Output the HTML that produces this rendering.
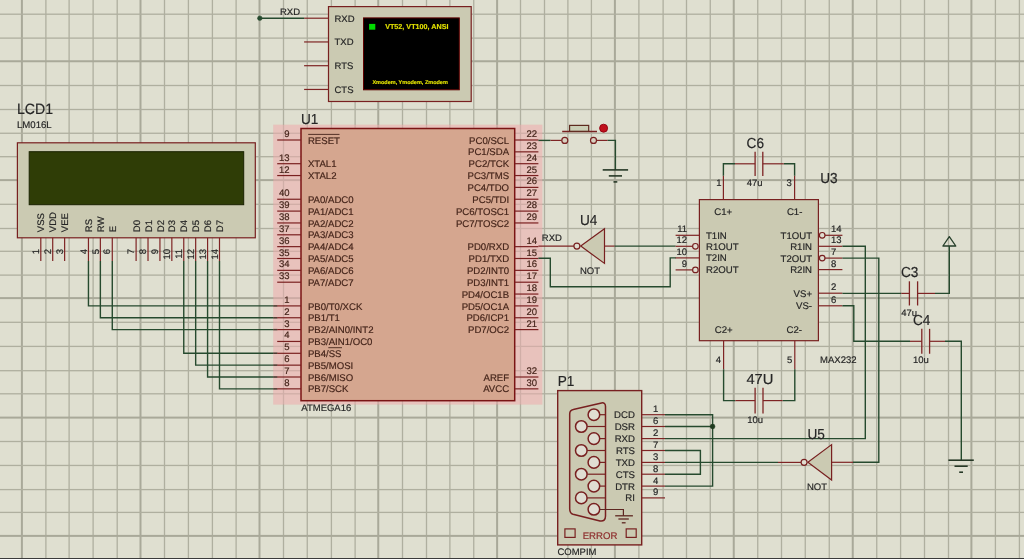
<!DOCTYPE html>
<html><head><meta charset="utf-8"><style>
html,body{margin:0;padding:0;background:#dfdfd0;}
svg{display:block;font-family:"Liberation Sans", sans-serif;will-change:transform;text-rendering:geometricPrecision;}
</style></head><body>
<svg width="1024" height="559" viewBox="0 0 1024 559">
<rect x="0" y="0" width="1024" height="559" fill="#dfdfd0"/>
<rect x="20.90" y="0" width="2" height="559" fill="#a9a999"/>
<rect x="45.25" y="0" width="1.3" height="559" fill="#afaf9f"/>
<rect x="68.45" y="0" width="1.3" height="559" fill="#afaf9f"/>
<rect x="92.45" y="0" width="1.3" height="559" fill="#afaf9f"/>
<rect x="116.55" y="0" width="1.3" height="559" fill="#afaf9f"/>
<rect x="139.50" y="0" width="2" height="559" fill="#a9a999"/>
<rect x="163.85" y="0" width="1.3" height="559" fill="#afaf9f"/>
<rect x="187.75" y="0" width="1.3" height="559" fill="#afaf9f"/>
<rect x="211.75" y="0" width="1.3" height="559" fill="#afaf9f"/>
<rect x="235.45" y="0" width="1.3" height="559" fill="#afaf9f"/>
<rect x="258.50" y="0" width="2" height="559" fill="#a9a999"/>
<rect x="282.85" y="0" width="1.3" height="559" fill="#afaf9f"/>
<rect x="306.60" y="0" width="1.3" height="559" fill="#afaf9f"/>
<rect x="330.75" y="0" width="1.3" height="559" fill="#afaf9f"/>
<rect x="354.45" y="0" width="1.3" height="559" fill="#afaf9f"/>
<rect x="377.25" y="0" width="2" height="559" fill="#a9a999"/>
<rect x="401.85" y="0" width="1.3" height="559" fill="#afaf9f"/>
<rect x="425.85" y="0" width="1.3" height="559" fill="#afaf9f"/>
<rect x="449.25" y="0" width="1.3" height="559" fill="#afaf9f"/>
<rect x="473.10" y="0" width="1.3" height="559" fill="#afaf9f"/>
<rect x="496.10" y="0" width="2" height="559" fill="#a9a999"/>
<rect x="519.85" y="0" width="1.3" height="559" fill="#afaf9f"/>
<rect x="543.85" y="0" width="1.3" height="559" fill="#afaf9f"/>
<rect x="567.25" y="0" width="1.3" height="559" fill="#afaf9f"/>
<rect x="590.75" y="0" width="1.3" height="559" fill="#afaf9f"/>
<rect x="613.90" y="0" width="2" height="559" fill="#a9a999"/>
<rect x="638.25" y="0" width="1.3" height="559" fill="#afaf9f"/>
<rect x="662.45" y="0" width="1.3" height="559" fill="#afaf9f"/>
<rect x="685.85" y="0" width="1.3" height="559" fill="#afaf9f"/>
<rect x="709.60" y="0" width="1.3" height="559" fill="#afaf9f"/>
<rect x="732.75" y="0" width="2" height="559" fill="#a9a999"/>
<rect x="757.10" y="0" width="1.3" height="559" fill="#afaf9f"/>
<rect x="780.85" y="0" width="1.3" height="559" fill="#afaf9f"/>
<rect x="804.60" y="0" width="1.3" height="559" fill="#afaf9f"/>
<rect x="828.60" y="0" width="1.3" height="559" fill="#afaf9f"/>
<rect x="851.75" y="0" width="2" height="559" fill="#a9a999"/>
<rect x="876.10" y="0" width="1.3" height="559" fill="#afaf9f"/>
<rect x="899.95" y="0" width="1.3" height="559" fill="#afaf9f"/>
<rect x="923.85" y="0" width="1.3" height="559" fill="#afaf9f"/>
<rect x="947.85" y="0" width="1.3" height="559" fill="#afaf9f"/>
<rect x="970.40" y="0" width="2" height="559" fill="#a9a999"/>
<rect x="994.75" y="0" width="1.3" height="559" fill="#afaf9f"/>
<rect x="1018.75" y="0" width="1.3" height="559" fill="#afaf9f"/>
<rect x="0" y="13.55" width="1024" height="1.3" fill="#afaf9f"/>
<rect x="0" y="37.45" width="1024" height="1.3" fill="#afaf9f"/>
<rect x="0" y="60.25" width="1024" height="2" fill="#a9a999"/>
<rect x="0" y="84.85" width="1024" height="1.3" fill="#afaf9f"/>
<rect x="0" y="108.85" width="1024" height="1.3" fill="#afaf9f"/>
<rect x="0" y="132.60" width="1024" height="1.3" fill="#afaf9f"/>
<rect x="0" y="156.05" width="1024" height="1.3" fill="#afaf9f"/>
<rect x="0" y="179.10" width="1024" height="2" fill="#a9a999"/>
<rect x="0" y="203.65" width="1024" height="1.3" fill="#afaf9f"/>
<rect x="0" y="227.85" width="1024" height="1.3" fill="#afaf9f"/>
<rect x="0" y="250.65" width="1024" height="1.3" fill="#afaf9f"/>
<rect x="0" y="274.45" width="1024" height="1.3" fill="#afaf9f"/>
<rect x="0" y="297.10" width="1024" height="2" fill="#a9a999"/>
<rect x="0" y="321.65" width="1024" height="1.3" fill="#afaf9f"/>
<rect x="0" y="345.75" width="1024" height="1.3" fill="#afaf9f"/>
<rect x="0" y="370.05" width="1024" height="1.3" fill="#afaf9f"/>
<rect x="0" y="393.15" width="1024" height="1.3" fill="#afaf9f"/>
<rect x="0" y="416.60" width="1024" height="2" fill="#a9a999"/>
<rect x="0" y="440.85" width="1024" height="1.3" fill="#afaf9f"/>
<rect x="0" y="464.80" width="1024" height="1.3" fill="#afaf9f"/>
<rect x="0" y="488.95" width="1024" height="1.3" fill="#afaf9f"/>
<rect x="0" y="511.75" width="1024" height="1.3" fill="#afaf9f"/>
<rect x="0" y="534.90" width="1024" height="2" fill="#a9a999"/>
<rect x="328.50" y="6.60" width="142.70" height="94.90" stroke="#782020" fill="#cbcab2" stroke-width="1.2"/>
<line x1="304.10" y1="18.20" x2="328.50" y2="18.20" stroke="#7e2424" stroke-width="1.2"/>
<text x="0" y="0" font-size="9.50" text-anchor="start" fill="#262626" stroke="#262626" stroke-width="0.18" font-weight="normal" transform="translate(334.50 21.70)">RXD</text>
<line x1="304.10" y1="41.95" x2="328.50" y2="41.95" stroke="#7e2424" stroke-width="1.2"/>
<text x="0" y="0" font-size="9.50" text-anchor="start" fill="#262626" stroke="#262626" stroke-width="0.18" font-weight="normal" transform="translate(334.50 45.45)">TXD</text>
<line x1="304.10" y1="65.70" x2="328.50" y2="65.70" stroke="#7e2424" stroke-width="1.2"/>
<text x="0" y="0" font-size="9.50" text-anchor="start" fill="#262626" stroke="#262626" stroke-width="0.18" font-weight="normal" transform="translate(334.50 69.20)">RTS</text>
<line x1="304.10" y1="89.45" x2="328.50" y2="89.45" stroke="#7e2424" stroke-width="1.2"/>
<text x="0" y="0" font-size="9.50" text-anchor="start" fill="#262626" stroke="#262626" stroke-width="0.18" font-weight="normal" transform="translate(334.50 92.95)">CTS</text>
<line x1="259.80" y1="18.20" x2="304.10" y2="18.20" stroke="#264a2e" stroke-width="1.4"/>
<circle cx="259.80" cy="18.20" r="2.30" stroke="#264a2e" fill="#264a2e" stroke-width="0.5"/>
<text x="0" y="0" font-size="9.50" text-anchor="start" fill="#262626" stroke="#262626" stroke-width="0.18" font-weight="normal" transform="translate(280.00 14.60)">RXD</text>
<rect x="363.50" y="17.90" width="95.80" height="71.90" stroke="#600000" fill="#000000" stroke-width="1.0"/>
<rect x="369.10" y="23.90" width="6.20" height="5.80" stroke="none" fill="#00dd00" stroke-width="0"/>
<text x="0" y="0" font-size="7.20" text-anchor="middle" fill="#dede00" stroke="#dede00" stroke-width="0.18" font-weight="bold" transform="translate(416.80 29.20)">VT52, VT100, ANSI</text>
<text x="0" y="0" font-size="5.50" text-anchor="middle" fill="#dede00" stroke="#dede00" stroke-width="0.18" font-weight="bold" transform="translate(410.10 84.20)">Xmodem, Ymodem, Zmodem</text>
<text x="0" y="0" font-size="15.01" text-anchor="start" fill="#262626" stroke="#262626" stroke-width="0.18" font-weight="normal" transform="translate(17.00 114.10) scale(0.940 1)">LCD1</text>
<text x="0" y="0" font-size="9.60" text-anchor="start" fill="#262626" stroke="#262626" stroke-width="0.18" font-weight="normal" transform="translate(17.00 127.60)">LM016L</text>
<rect x="17.40" y="142.80" width="237.90" height="95.00" stroke="#782020" fill="#cbcab2" stroke-width="1.2"/>
<rect x="29.20" y="151.70" width="214.50" height="53.00" stroke="#1a2200" fill="#2f3d06" stroke-width="1.0"/>
<text x="0" y="0" font-size="9.50" text-anchor="start" fill="#262626" stroke="#262626" stroke-width="0.18" font-weight="normal" transform="translate(44.40 232.20) rotate(-90)">VSS</text>
<text x="0" y="0" font-size="9.50" text-anchor="end" fill="#262626" stroke="#262626" stroke-width="0.18" font-weight="normal" transform="translate(39.00 248.90) rotate(-90)">1</text>
<line x1="40.80" y1="237.80" x2="40.80" y2="261.00" stroke="#7e2424" stroke-width="1.2"/>
<text x="0" y="0" font-size="9.50" text-anchor="start" fill="#262626" stroke="#262626" stroke-width="0.18" font-weight="normal" transform="translate(56.31 232.20) rotate(-90)">VDD</text>
<text x="0" y="0" font-size="9.50" text-anchor="end" fill="#262626" stroke="#262626" stroke-width="0.18" font-weight="normal" transform="translate(50.91 248.90) rotate(-90)">2</text>
<line x1="52.71" y1="237.80" x2="52.71" y2="261.00" stroke="#7e2424" stroke-width="1.2"/>
<text x="0" y="0" font-size="9.50" text-anchor="start" fill="#262626" stroke="#262626" stroke-width="0.18" font-weight="normal" transform="translate(68.23 232.20) rotate(-90)">VEE</text>
<text x="0" y="0" font-size="9.50" text-anchor="end" fill="#262626" stroke="#262626" stroke-width="0.18" font-weight="normal" transform="translate(62.83 248.90) rotate(-90)">3</text>
<line x1="64.63" y1="237.80" x2="64.63" y2="261.00" stroke="#7e2424" stroke-width="1.2"/>
<text x="0" y="0" font-size="9.50" text-anchor="start" fill="#262626" stroke="#262626" stroke-width="0.18" font-weight="normal" transform="translate(92.05 232.20) rotate(-90)">RS</text>
<text x="0" y="0" font-size="9.50" text-anchor="end" fill="#262626" stroke="#262626" stroke-width="0.18" font-weight="normal" transform="translate(86.65 248.90) rotate(-90)">4</text>
<line x1="88.45" y1="237.80" x2="88.45" y2="261.00" stroke="#7e2424" stroke-width="1.2"/>
<text x="0" y="0" font-size="9.50" text-anchor="start" fill="#262626" stroke="#262626" stroke-width="0.18" font-weight="normal" transform="translate(103.96 232.20) rotate(-90)">RW</text>
<text x="0" y="0" font-size="9.50" text-anchor="end" fill="#262626" stroke="#262626" stroke-width="0.18" font-weight="normal" transform="translate(98.56 248.90) rotate(-90)">5</text>
<line x1="100.36" y1="237.80" x2="100.36" y2="261.00" stroke="#7e2424" stroke-width="1.2"/>
<text x="0" y="0" font-size="9.50" text-anchor="start" fill="#262626" stroke="#262626" stroke-width="0.18" font-weight="normal" transform="translate(115.88 232.20) rotate(-90)">E</text>
<text x="0" y="0" font-size="9.50" text-anchor="end" fill="#262626" stroke="#262626" stroke-width="0.18" font-weight="normal" transform="translate(110.48 248.90) rotate(-90)">6</text>
<line x1="112.28" y1="237.80" x2="112.28" y2="261.00" stroke="#7e2424" stroke-width="1.2"/>
<text x="0" y="0" font-size="9.50" text-anchor="start" fill="#262626" stroke="#262626" stroke-width="0.18" font-weight="normal" transform="translate(139.70 232.20) rotate(-90)">D0</text>
<text x="0" y="0" font-size="9.50" text-anchor="end" fill="#262626" stroke="#262626" stroke-width="0.18" font-weight="normal" transform="translate(134.30 248.90) rotate(-90)">7</text>
<line x1="136.10" y1="237.80" x2="136.10" y2="261.00" stroke="#7e2424" stroke-width="1.2"/>
<text x="0" y="0" font-size="9.50" text-anchor="start" fill="#262626" stroke="#262626" stroke-width="0.18" font-weight="normal" transform="translate(151.62 232.20) rotate(-90)">D1</text>
<text x="0" y="0" font-size="9.50" text-anchor="end" fill="#262626" stroke="#262626" stroke-width="0.18" font-weight="normal" transform="translate(146.22 248.90) rotate(-90)">8</text>
<line x1="148.02" y1="237.80" x2="148.02" y2="261.00" stroke="#7e2424" stroke-width="1.2"/>
<text x="0" y="0" font-size="9.50" text-anchor="start" fill="#262626" stroke="#262626" stroke-width="0.18" font-weight="normal" transform="translate(163.53 232.20) rotate(-90)">D2</text>
<text x="0" y="0" font-size="9.50" text-anchor="end" fill="#262626" stroke="#262626" stroke-width="0.18" font-weight="normal" transform="translate(158.13 248.90) rotate(-90)">9</text>
<line x1="159.93" y1="237.80" x2="159.93" y2="261.00" stroke="#7e2424" stroke-width="1.2"/>
<text x="0" y="0" font-size="9.50" text-anchor="start" fill="#262626" stroke="#262626" stroke-width="0.18" font-weight="normal" transform="translate(175.44 232.20) rotate(-90)">D3</text>
<text x="0" y="0" font-size="9.50" text-anchor="end" fill="#262626" stroke="#262626" stroke-width="0.18" font-weight="normal" transform="translate(170.04 248.90) rotate(-90)">10</text>
<line x1="171.84" y1="237.80" x2="171.84" y2="261.00" stroke="#7e2424" stroke-width="1.2"/>
<text x="0" y="0" font-size="9.50" text-anchor="start" fill="#262626" stroke="#262626" stroke-width="0.18" font-weight="normal" transform="translate(187.36 232.20) rotate(-90)">D4</text>
<text x="0" y="0" font-size="9.50" text-anchor="end" fill="#262626" stroke="#262626" stroke-width="0.18" font-weight="normal" transform="translate(181.96 248.90) rotate(-90)">11</text>
<line x1="183.76" y1="237.80" x2="183.76" y2="261.00" stroke="#7e2424" stroke-width="1.2"/>
<text x="0" y="0" font-size="9.50" text-anchor="start" fill="#262626" stroke="#262626" stroke-width="0.18" font-weight="normal" transform="translate(199.27 232.20) rotate(-90)">D5</text>
<text x="0" y="0" font-size="9.50" text-anchor="end" fill="#262626" stroke="#262626" stroke-width="0.18" font-weight="normal" transform="translate(193.87 248.90) rotate(-90)">12</text>
<line x1="195.67" y1="237.80" x2="195.67" y2="261.00" stroke="#7e2424" stroke-width="1.2"/>
<text x="0" y="0" font-size="9.50" text-anchor="start" fill="#262626" stroke="#262626" stroke-width="0.18" font-weight="normal" transform="translate(211.18 232.20) rotate(-90)">D6</text>
<text x="0" y="0" font-size="9.50" text-anchor="end" fill="#262626" stroke="#262626" stroke-width="0.18" font-weight="normal" transform="translate(205.78 248.90) rotate(-90)">13</text>
<line x1="207.58" y1="237.80" x2="207.58" y2="261.00" stroke="#7e2424" stroke-width="1.2"/>
<text x="0" y="0" font-size="9.50" text-anchor="start" fill="#262626" stroke="#262626" stroke-width="0.18" font-weight="normal" transform="translate(223.09 232.20) rotate(-90)">D7</text>
<text x="0" y="0" font-size="9.50" text-anchor="end" fill="#262626" stroke="#262626" stroke-width="0.18" font-weight="normal" transform="translate(217.69 248.90) rotate(-90)">14</text>
<line x1="219.50" y1="237.80" x2="219.50" y2="261.00" stroke="#7e2424" stroke-width="1.2"/>
<polyline points="88.45,261.00 88.45,305.90 277.20,305.90" stroke="#264a2e" stroke-width="1.4" fill="none" stroke-linejoin="miter"/>
<polyline points="100.36,261.00 100.36,317.75 277.20,317.75" stroke="#264a2e" stroke-width="1.4" fill="none" stroke-linejoin="miter"/>
<polyline points="112.28,261.00 112.28,329.60 277.20,329.60" stroke="#264a2e" stroke-width="1.4" fill="none" stroke-linejoin="miter"/>
<polyline points="183.76,261.00 183.76,353.30 277.20,353.30" stroke="#264a2e" stroke-width="1.4" fill="none" stroke-linejoin="miter"/>
<polyline points="195.67,261.00 195.67,365.15 277.20,365.15" stroke="#264a2e" stroke-width="1.4" fill="none" stroke-linejoin="miter"/>
<polyline points="207.58,261.00 207.58,377.00 277.20,377.00" stroke="#264a2e" stroke-width="1.4" fill="none" stroke-linejoin="miter"/>
<polyline points="219.50,261.00 219.50,388.85 277.20,388.85" stroke="#264a2e" stroke-width="1.4" fill="none" stroke-linejoin="miter"/>
<path d="M273.3,124.8 H542.3 V404.4 H273.3 Z M301.0,128.5 V400.7 H514.7 V128.5 Z" fill="#ffdde0" fill-rule="evenodd" style="mix-blend-mode:multiply"/>
<path d="M273.3,124.8 H542.3 V404.4 H273.3 Z M301.0,128.5 V400.7 H514.7 V128.5 Z" fill="rgba(241,195,193,0.5)" fill-rule="evenodd"/>
<line x1="273.3" y1="388.85" x2="277.4" y2="388.85" stroke="#4e3a30" stroke-width="1.4"/>
<line x1="273.3" y1="377.00" x2="277.4" y2="377.00" stroke="#4e3a30" stroke-width="1.4"/>
<line x1="273.3" y1="365.15" x2="277.4" y2="365.15" stroke="#4e3a30" stroke-width="1.4"/>
<line x1="273.3" y1="353.30" x2="277.4" y2="353.30" stroke="#4e3a30" stroke-width="1.4"/>
<line x1="273.3" y1="329.60" x2="277.4" y2="329.60" stroke="#4e3a30" stroke-width="1.4"/>
<line x1="273.3" y1="317.75" x2="277.4" y2="317.75" stroke="#4e3a30" stroke-width="1.4"/>
<line x1="273.3" y1="305.90" x2="277.4" y2="305.90" stroke="#4e3a30" stroke-width="1.4"/>
<rect x="301.00" y="128.50" width="213.70" height="272.20" stroke="#7a1414" fill="#d5a68f" stroke-width="1.5"/>
<text x="0" y="0" font-size="14.49" text-anchor="start" fill="#262626" stroke="#262626" stroke-width="0.18" font-weight="normal" transform="translate(301.00 123.70) scale(0.940 1)">U1</text>
<text x="0" y="0" font-size="9.50" text-anchor="start" fill="#262626" stroke="#262626" stroke-width="0.18" font-weight="normal" transform="translate(301.30 410.60)">ATMEGA16</text>
<line x1="277.20" y1="140.00" x2="301.00" y2="140.00" stroke="#7a2020" stroke-width="1.2"/>
<text x="0" y="0" font-size="9.50" text-anchor="end" fill="#44241a" stroke="#44241a" stroke-width="0.18" font-weight="normal" transform="translate(289.50 137.00)">9</text>
<text x="0" y="0" font-size="9.60" text-anchor="start" fill="#44241a" stroke="#44241a" stroke-width="0.18" font-weight="normal" transform="translate(307.90 143.60)">RESET</text>
<line x1="277.20" y1="163.70" x2="301.00" y2="163.70" stroke="#7a2020" stroke-width="1.2"/>
<text x="0" y="0" font-size="9.50" text-anchor="end" fill="#44241a" stroke="#44241a" stroke-width="0.18" font-weight="normal" transform="translate(289.50 160.70)">13</text>
<text x="0" y="0" font-size="9.60" text-anchor="start" fill="#44241a" stroke="#44241a" stroke-width="0.18" font-weight="normal" transform="translate(307.90 167.30)">XTAL1</text>
<line x1="277.20" y1="175.55" x2="301.00" y2="175.55" stroke="#7a2020" stroke-width="1.2"/>
<text x="0" y="0" font-size="9.50" text-anchor="end" fill="#44241a" stroke="#44241a" stroke-width="0.18" font-weight="normal" transform="translate(289.50 172.55)">12</text>
<text x="0" y="0" font-size="9.60" text-anchor="start" fill="#44241a" stroke="#44241a" stroke-width="0.18" font-weight="normal" transform="translate(307.90 179.15)">XTAL2</text>
<line x1="277.20" y1="199.25" x2="301.00" y2="199.25" stroke="#7a2020" stroke-width="1.2"/>
<text x="0" y="0" font-size="9.50" text-anchor="end" fill="#44241a" stroke="#44241a" stroke-width="0.18" font-weight="normal" transform="translate(289.50 196.25)">40</text>
<text x="0" y="0" font-size="9.60" text-anchor="start" fill="#44241a" stroke="#44241a" stroke-width="0.18" font-weight="normal" transform="translate(307.90 202.85)">PA0/ADC0</text>
<line x1="277.20" y1="211.10" x2="301.00" y2="211.10" stroke="#7a2020" stroke-width="1.2"/>
<text x="0" y="0" font-size="9.50" text-anchor="end" fill="#44241a" stroke="#44241a" stroke-width="0.18" font-weight="normal" transform="translate(289.50 208.10)">39</text>
<text x="0" y="0" font-size="9.60" text-anchor="start" fill="#44241a" stroke="#44241a" stroke-width="0.18" font-weight="normal" transform="translate(307.90 214.70)">PA1/ADC1</text>
<line x1="277.20" y1="222.95" x2="301.00" y2="222.95" stroke="#7a2020" stroke-width="1.2"/>
<text x="0" y="0" font-size="9.50" text-anchor="end" fill="#44241a" stroke="#44241a" stroke-width="0.18" font-weight="normal" transform="translate(289.50 219.95)">38</text>
<text x="0" y="0" font-size="9.60" text-anchor="start" fill="#44241a" stroke="#44241a" stroke-width="0.18" font-weight="normal" transform="translate(307.90 226.55)">PA2/ADC2</text>
<line x1="277.20" y1="234.80" x2="301.00" y2="234.80" stroke="#7a2020" stroke-width="1.2"/>
<text x="0" y="0" font-size="9.50" text-anchor="end" fill="#44241a" stroke="#44241a" stroke-width="0.18" font-weight="normal" transform="translate(289.50 231.80)">37</text>
<text x="0" y="0" font-size="9.60" text-anchor="start" fill="#44241a" stroke="#44241a" stroke-width="0.18" font-weight="normal" transform="translate(307.90 238.40)">PA3/ADC3</text>
<line x1="277.20" y1="246.65" x2="301.00" y2="246.65" stroke="#7a2020" stroke-width="1.2"/>
<text x="0" y="0" font-size="9.50" text-anchor="end" fill="#44241a" stroke="#44241a" stroke-width="0.18" font-weight="normal" transform="translate(289.50 243.65)">36</text>
<text x="0" y="0" font-size="9.60" text-anchor="start" fill="#44241a" stroke="#44241a" stroke-width="0.18" font-weight="normal" transform="translate(307.90 250.25)">PA4/ADC4</text>
<line x1="277.20" y1="258.50" x2="301.00" y2="258.50" stroke="#7a2020" stroke-width="1.2"/>
<text x="0" y="0" font-size="9.50" text-anchor="end" fill="#44241a" stroke="#44241a" stroke-width="0.18" font-weight="normal" transform="translate(289.50 255.50)">35</text>
<text x="0" y="0" font-size="9.60" text-anchor="start" fill="#44241a" stroke="#44241a" stroke-width="0.18" font-weight="normal" transform="translate(307.90 262.10)">PA5/ADC5</text>
<line x1="277.20" y1="270.35" x2="301.00" y2="270.35" stroke="#7a2020" stroke-width="1.2"/>
<text x="0" y="0" font-size="9.50" text-anchor="end" fill="#44241a" stroke="#44241a" stroke-width="0.18" font-weight="normal" transform="translate(289.50 267.35)">34</text>
<text x="0" y="0" font-size="9.60" text-anchor="start" fill="#44241a" stroke="#44241a" stroke-width="0.18" font-weight="normal" transform="translate(307.90 273.95)">PA6/ADC6</text>
<line x1="277.20" y1="282.20" x2="301.00" y2="282.20" stroke="#7a2020" stroke-width="1.2"/>
<text x="0" y="0" font-size="9.50" text-anchor="end" fill="#44241a" stroke="#44241a" stroke-width="0.18" font-weight="normal" transform="translate(289.50 279.20)">33</text>
<text x="0" y="0" font-size="9.60" text-anchor="start" fill="#44241a" stroke="#44241a" stroke-width="0.18" font-weight="normal" transform="translate(307.90 285.80)">PA7/ADC7</text>
<line x1="277.20" y1="305.90" x2="301.00" y2="305.90" stroke="#7a2020" stroke-width="1.2"/>
<text x="0" y="0" font-size="9.50" text-anchor="end" fill="#44241a" stroke="#44241a" stroke-width="0.18" font-weight="normal" transform="translate(289.50 302.90)">1</text>
<text x="0" y="0" font-size="9.60" text-anchor="start" fill="#44241a" stroke="#44241a" stroke-width="0.18" font-weight="normal" transform="translate(307.90 309.50)">PB0/T0/XCK</text>
<line x1="277.20" y1="317.75" x2="301.00" y2="317.75" stroke="#7a2020" stroke-width="1.2"/>
<text x="0" y="0" font-size="9.50" text-anchor="end" fill="#44241a" stroke="#44241a" stroke-width="0.18" font-weight="normal" transform="translate(289.50 314.75)">2</text>
<text x="0" y="0" font-size="9.60" text-anchor="start" fill="#44241a" stroke="#44241a" stroke-width="0.18" font-weight="normal" transform="translate(307.90 321.35)">PB1/T1</text>
<line x1="277.20" y1="329.60" x2="301.00" y2="329.60" stroke="#7a2020" stroke-width="1.2"/>
<text x="0" y="0" font-size="9.50" text-anchor="end" fill="#44241a" stroke="#44241a" stroke-width="0.18" font-weight="normal" transform="translate(289.50 326.60)">3</text>
<text x="0" y="0" font-size="9.60" text-anchor="start" fill="#44241a" stroke="#44241a" stroke-width="0.18" font-weight="normal" transform="translate(307.90 333.20)">PB2/AIN0/INT2</text>
<line x1="277.20" y1="341.45" x2="301.00" y2="341.45" stroke="#7a2020" stroke-width="1.2"/>
<text x="0" y="0" font-size="9.50" text-anchor="end" fill="#44241a" stroke="#44241a" stroke-width="0.18" font-weight="normal" transform="translate(289.50 338.45)">4</text>
<text x="0" y="0" font-size="9.60" text-anchor="start" fill="#44241a" stroke="#44241a" stroke-width="0.18" font-weight="normal" transform="translate(307.90 345.05)">PB3/AIN1/OC0</text>
<line x1="277.20" y1="353.30" x2="301.00" y2="353.30" stroke="#7a2020" stroke-width="1.2"/>
<text x="0" y="0" font-size="9.50" text-anchor="end" fill="#44241a" stroke="#44241a" stroke-width="0.18" font-weight="normal" transform="translate(289.50 350.30)">5</text>
<text x="0" y="0" font-size="9.60" text-anchor="start" fill="#44241a" stroke="#44241a" stroke-width="0.18" font-weight="normal" transform="translate(307.90 356.90)">PB4/SS</text>
<line x1="277.20" y1="365.15" x2="301.00" y2="365.15" stroke="#7a2020" stroke-width="1.2"/>
<text x="0" y="0" font-size="9.50" text-anchor="end" fill="#44241a" stroke="#44241a" stroke-width="0.18" font-weight="normal" transform="translate(289.50 362.15)">6</text>
<text x="0" y="0" font-size="9.60" text-anchor="start" fill="#44241a" stroke="#44241a" stroke-width="0.18" font-weight="normal" transform="translate(307.90 368.75)">PB5/MOSI</text>
<line x1="277.20" y1="377.00" x2="301.00" y2="377.00" stroke="#7a2020" stroke-width="1.2"/>
<text x="0" y="0" font-size="9.50" text-anchor="end" fill="#44241a" stroke="#44241a" stroke-width="0.18" font-weight="normal" transform="translate(289.50 374.00)">7</text>
<text x="0" y="0" font-size="9.60" text-anchor="start" fill="#44241a" stroke="#44241a" stroke-width="0.18" font-weight="normal" transform="translate(307.90 380.60)">PB6/MISO</text>
<line x1="277.20" y1="388.85" x2="301.00" y2="388.85" stroke="#7a2020" stroke-width="1.2"/>
<text x="0" y="0" font-size="9.50" text-anchor="end" fill="#44241a" stroke="#44241a" stroke-width="0.18" font-weight="normal" transform="translate(289.50 385.85)">8</text>
<text x="0" y="0" font-size="9.60" text-anchor="start" fill="#44241a" stroke="#44241a" stroke-width="0.18" font-weight="normal" transform="translate(307.90 392.45)">PB7/SCK</text>
<line x1="514.70" y1="140.00" x2="538.40" y2="140.00" stroke="#7a2020" stroke-width="1.2"/>
<text x="0" y="0" font-size="9.50" text-anchor="start" fill="#44241a" stroke="#44241a" stroke-width="0.18" font-weight="normal" transform="translate(526.50 137.00)">22</text>
<text x="0" y="0" font-size="9.60" text-anchor="end" fill="#44241a" stroke="#44241a" stroke-width="0.18" font-weight="normal" transform="translate(509.10 143.60)">PC0/SCL</text>
<line x1="514.70" y1="151.85" x2="538.40" y2="151.85" stroke="#7a2020" stroke-width="1.2"/>
<text x="0" y="0" font-size="9.50" text-anchor="start" fill="#44241a" stroke="#44241a" stroke-width="0.18" font-weight="normal" transform="translate(526.50 148.85)">23</text>
<text x="0" y="0" font-size="9.60" text-anchor="end" fill="#44241a" stroke="#44241a" stroke-width="0.18" font-weight="normal" transform="translate(509.10 155.45)">PC1/SDA</text>
<line x1="514.70" y1="163.70" x2="538.40" y2="163.70" stroke="#7a2020" stroke-width="1.2"/>
<text x="0" y="0" font-size="9.50" text-anchor="start" fill="#44241a" stroke="#44241a" stroke-width="0.18" font-weight="normal" transform="translate(526.50 160.70)">24</text>
<text x="0" y="0" font-size="9.60" text-anchor="end" fill="#44241a" stroke="#44241a" stroke-width="0.18" font-weight="normal" transform="translate(509.10 167.30)">PC2/TCK</text>
<line x1="514.70" y1="175.55" x2="538.40" y2="175.55" stroke="#7a2020" stroke-width="1.2"/>
<text x="0" y="0" font-size="9.50" text-anchor="start" fill="#44241a" stroke="#44241a" stroke-width="0.18" font-weight="normal" transform="translate(526.50 172.55)">25</text>
<text x="0" y="0" font-size="9.60" text-anchor="end" fill="#44241a" stroke="#44241a" stroke-width="0.18" font-weight="normal" transform="translate(509.10 179.15)">PC3/TMS</text>
<line x1="514.70" y1="187.40" x2="538.40" y2="187.40" stroke="#7a2020" stroke-width="1.2"/>
<text x="0" y="0" font-size="9.50" text-anchor="start" fill="#44241a" stroke="#44241a" stroke-width="0.18" font-weight="normal" transform="translate(526.50 184.40)">26</text>
<text x="0" y="0" font-size="9.60" text-anchor="end" fill="#44241a" stroke="#44241a" stroke-width="0.18" font-weight="normal" transform="translate(509.10 191.00)">PC4/TDO</text>
<line x1="514.70" y1="199.25" x2="538.40" y2="199.25" stroke="#7a2020" stroke-width="1.2"/>
<text x="0" y="0" font-size="9.50" text-anchor="start" fill="#44241a" stroke="#44241a" stroke-width="0.18" font-weight="normal" transform="translate(526.50 196.25)">27</text>
<text x="0" y="0" font-size="9.60" text-anchor="end" fill="#44241a" stroke="#44241a" stroke-width="0.18" font-weight="normal" transform="translate(509.10 202.85)">PC5/TDI</text>
<line x1="514.70" y1="211.10" x2="538.40" y2="211.10" stroke="#7a2020" stroke-width="1.2"/>
<text x="0" y="0" font-size="9.50" text-anchor="start" fill="#44241a" stroke="#44241a" stroke-width="0.18" font-weight="normal" transform="translate(526.50 208.10)">28</text>
<text x="0" y="0" font-size="9.60" text-anchor="end" fill="#44241a" stroke="#44241a" stroke-width="0.18" font-weight="normal" transform="translate(509.10 214.70)">PC6/TOSC1</text>
<line x1="514.70" y1="222.95" x2="538.40" y2="222.95" stroke="#7a2020" stroke-width="1.2"/>
<text x="0" y="0" font-size="9.50" text-anchor="start" fill="#44241a" stroke="#44241a" stroke-width="0.18" font-weight="normal" transform="translate(526.50 219.95)">29</text>
<text x="0" y="0" font-size="9.60" text-anchor="end" fill="#44241a" stroke="#44241a" stroke-width="0.18" font-weight="normal" transform="translate(509.10 226.55)">PC7/TOSC2</text>
<line x1="514.70" y1="246.65" x2="538.40" y2="246.65" stroke="#7a2020" stroke-width="1.2"/>
<text x="0" y="0" font-size="9.50" text-anchor="start" fill="#44241a" stroke="#44241a" stroke-width="0.18" font-weight="normal" transform="translate(526.50 243.65)">14</text>
<text x="0" y="0" font-size="9.60" text-anchor="end" fill="#44241a" stroke="#44241a" stroke-width="0.18" font-weight="normal" transform="translate(509.10 250.25)">PD0/RXD</text>
<line x1="514.70" y1="258.50" x2="538.40" y2="258.50" stroke="#7a2020" stroke-width="1.2"/>
<text x="0" y="0" font-size="9.50" text-anchor="start" fill="#44241a" stroke="#44241a" stroke-width="0.18" font-weight="normal" transform="translate(526.50 255.50)">15</text>
<text x="0" y="0" font-size="9.60" text-anchor="end" fill="#44241a" stroke="#44241a" stroke-width="0.18" font-weight="normal" transform="translate(509.10 262.10)">PD1/TXD</text>
<line x1="514.70" y1="270.35" x2="538.40" y2="270.35" stroke="#7a2020" stroke-width="1.2"/>
<text x="0" y="0" font-size="9.50" text-anchor="start" fill="#44241a" stroke="#44241a" stroke-width="0.18" font-weight="normal" transform="translate(526.50 267.35)">16</text>
<text x="0" y="0" font-size="9.60" text-anchor="end" fill="#44241a" stroke="#44241a" stroke-width="0.18" font-weight="normal" transform="translate(509.10 273.95)">PD2/INT0</text>
<line x1="514.70" y1="282.20" x2="538.40" y2="282.20" stroke="#7a2020" stroke-width="1.2"/>
<text x="0" y="0" font-size="9.50" text-anchor="start" fill="#44241a" stroke="#44241a" stroke-width="0.18" font-weight="normal" transform="translate(526.50 279.20)">17</text>
<text x="0" y="0" font-size="9.60" text-anchor="end" fill="#44241a" stroke="#44241a" stroke-width="0.18" font-weight="normal" transform="translate(509.10 285.80)">PD3/INT1</text>
<line x1="514.70" y1="294.05" x2="538.40" y2="294.05" stroke="#7a2020" stroke-width="1.2"/>
<text x="0" y="0" font-size="9.50" text-anchor="start" fill="#44241a" stroke="#44241a" stroke-width="0.18" font-weight="normal" transform="translate(526.50 291.05)">18</text>
<text x="0" y="0" font-size="9.60" text-anchor="end" fill="#44241a" stroke="#44241a" stroke-width="0.18" font-weight="normal" transform="translate(509.10 297.65)">PD4/OC1B</text>
<line x1="514.70" y1="305.90" x2="538.40" y2="305.90" stroke="#7a2020" stroke-width="1.2"/>
<text x="0" y="0" font-size="9.50" text-anchor="start" fill="#44241a" stroke="#44241a" stroke-width="0.18" font-weight="normal" transform="translate(526.50 302.90)">19</text>
<text x="0" y="0" font-size="9.60" text-anchor="end" fill="#44241a" stroke="#44241a" stroke-width="0.18" font-weight="normal" transform="translate(509.10 309.50)">PD5/OC1A</text>
<line x1="514.70" y1="317.75" x2="538.40" y2="317.75" stroke="#7a2020" stroke-width="1.2"/>
<text x="0" y="0" font-size="9.50" text-anchor="start" fill="#44241a" stroke="#44241a" stroke-width="0.18" font-weight="normal" transform="translate(526.50 314.75)">20</text>
<text x="0" y="0" font-size="9.60" text-anchor="end" fill="#44241a" stroke="#44241a" stroke-width="0.18" font-weight="normal" transform="translate(509.10 321.35)">PD6/ICP1</text>
<line x1="514.70" y1="329.60" x2="538.40" y2="329.60" stroke="#7a2020" stroke-width="1.2"/>
<text x="0" y="0" font-size="9.50" text-anchor="start" fill="#44241a" stroke="#44241a" stroke-width="0.18" font-weight="normal" transform="translate(526.50 326.60)">21</text>
<text x="0" y="0" font-size="9.60" text-anchor="end" fill="#44241a" stroke="#44241a" stroke-width="0.18" font-weight="normal" transform="translate(509.10 333.20)">PD7/OC2</text>
<line x1="514.70" y1="377.00" x2="538.40" y2="377.00" stroke="#7a2020" stroke-width="1.2"/>
<text x="0" y="0" font-size="9.50" text-anchor="start" fill="#44241a" stroke="#44241a" stroke-width="0.18" font-weight="normal" transform="translate(526.50 374.00)">32</text>
<text x="0" y="0" font-size="9.60" text-anchor="end" fill="#44241a" stroke="#44241a" stroke-width="0.18" font-weight="normal" transform="translate(509.10 380.60)">AREF</text>
<line x1="514.70" y1="388.85" x2="538.40" y2="388.85" stroke="#7a2020" stroke-width="1.2"/>
<text x="0" y="0" font-size="9.50" text-anchor="start" fill="#44241a" stroke="#44241a" stroke-width="0.18" font-weight="normal" transform="translate(526.50 385.85)">30</text>
<text x="0" y="0" font-size="9.60" text-anchor="end" fill="#44241a" stroke="#44241a" stroke-width="0.18" font-weight="normal" transform="translate(509.10 392.45)">AVCC</text>
<line x1="308.20" y1="134.40" x2="339.50" y2="134.40" stroke="#44241a" stroke-width="0.9"/>
<line x1="328.30" y1="347.70" x2="342.00" y2="347.70" stroke="#44241a" stroke-width="0.9"/>
<line x1="538.40" y1="140.40" x2="550.50" y2="140.40" stroke="#264a2e" stroke-width="1.4"/>
<line x1="550.50" y1="140.40" x2="561.80" y2="140.40" stroke="#7e2424" stroke-width="1.2"/>
<line x1="562.20" y1="131.50" x2="597.00" y2="131.50" stroke="#782020" stroke-width="1.3"/>
<rect x="569.60" y="125.40" width="19.10" height="5.90" stroke="#5e2a1e" fill="#cbcfb6" stroke-width="1.2"/>
<circle cx="603.60" cy="128.20" r="4.00" stroke="#900010" fill="#c0101c" stroke-width="0.9"/>
<circle cx="564.80" cy="140.40" r="3.00" stroke="#782020" fill="#d8d0c0" stroke-width="1.2"/>
<circle cx="593.50" cy="140.40" r="3.00" stroke="#782020" fill="#d8d0c0" stroke-width="1.2"/>
<line x1="596.50" y1="140.40" x2="607.70" y2="140.40" stroke="#7e2424" stroke-width="1.2"/>
<polyline points="607.70,140.40 615.40,140.40 615.40,169.90" stroke="#264a2e" stroke-width="1.4" fill="none" stroke-linejoin="miter"/>
<line x1="602.70" y1="169.90" x2="628.10" y2="169.90" stroke="#263826" stroke-width="1.6"/>
<line x1="608.80" y1="175.90" x2="622.00" y2="175.90" stroke="#263826" stroke-width="1.6"/>
<line x1="613.50" y1="181.90" x2="617.30" y2="181.90" stroke="#263826" stroke-width="1.6"/>
<line x1="538.40" y1="246.20" x2="574.00" y2="246.20" stroke="#7e2424" stroke-width="1.2"/>
<polygon points="604.50,228.80 604.50,263.40 580.70,246.10" fill="#cbcab2" stroke="#782020" stroke-width="1.2"/>
<circle cx="576.90" cy="246.10" r="3.00" stroke="#782020" fill="#e0ddd0" stroke-width="1.2"/>
<text x="0" y="0" font-size="14.49" text-anchor="start" fill="#262626" stroke="#262626" stroke-width="0.18" font-weight="normal" transform="translate(580.00 224.50) scale(0.940 1)">U4</text>
<text x="0" y="0" font-size="9.50" text-anchor="start" fill="#262626" stroke="#262626" stroke-width="0.18" font-weight="normal" transform="translate(580.00 274.20)">NOT</text>
<text x="0" y="0" font-size="9.50" text-anchor="start" fill="#262626" stroke="#262626" stroke-width="0.18" font-weight="normal" transform="translate(541.80 241.20)">RXD</text>
<line x1="604.50" y1="246.10" x2="614.60" y2="246.10" stroke="#7e2424" stroke-width="1.2"/>
<line x1="614.60" y1="246.10" x2="675.60" y2="246.10" stroke="#264a2e" stroke-width="1.4"/>
<polyline points="538.40,258.30 550.30,258.30 550.30,286.80 670.20,286.80 670.20,257.90 676.00,257.90" stroke="#264a2e" stroke-width="1.4" fill="none" stroke-linejoin="miter"/>
<rect x="699.40" y="199.60" width="119.00" height="141.10" stroke="#782020" fill="#cbcab2" stroke-width="1.2"/>
<text x="0" y="0" font-size="14.49" text-anchor="start" fill="#262626" stroke="#262626" stroke-width="0.18" font-weight="normal" transform="translate(820.20 182.60) scale(0.940 1)">U3</text>
<text x="0" y="0" font-size="9.50" text-anchor="start" fill="#262626" stroke="#262626" stroke-width="0.18" font-weight="normal" transform="translate(820.10 363.30)">MAX232</text>
<line x1="675.60" y1="235.30" x2="699.40" y2="235.30" stroke="#7e2424" stroke-width="1.2"/>
<text x="0" y="0" font-size="9.50" text-anchor="end" fill="#262626" stroke="#262626" stroke-width="0.18" font-weight="normal" transform="translate(687.00 232.20)">11</text>
<text x="0" y="0" font-size="9.60" text-anchor="start" fill="#262626" stroke="#262626" stroke-width="0.18" font-weight="normal" transform="translate(706.00 238.70)">T1IN</text>
<line x1="675.60" y1="246.30" x2="692.50" y2="246.30" stroke="#7e2424" stroke-width="1.2"/>
<circle cx="695.40" cy="246.30" r="2.80" stroke="#782020" fill="#e0ddd0" stroke-width="1.2"/>
<text x="0" y="0" font-size="9.50" text-anchor="end" fill="#262626" stroke="#262626" stroke-width="0.18" font-weight="normal" transform="translate(687.00 243.20)">12</text>
<text x="0" y="0" font-size="9.60" text-anchor="start" fill="#262626" stroke="#262626" stroke-width="0.18" font-weight="normal" transform="translate(706.00 249.70)">R1OUT</text>
<line x1="675.60" y1="257.90" x2="699.40" y2="257.90" stroke="#7e2424" stroke-width="1.2"/>
<text x="0" y="0" font-size="9.50" text-anchor="end" fill="#262626" stroke="#262626" stroke-width="0.18" font-weight="normal" transform="translate(687.00 254.80)">10</text>
<text x="0" y="0" font-size="9.60" text-anchor="start" fill="#262626" stroke="#262626" stroke-width="0.18" font-weight="normal" transform="translate(706.00 261.30)">T2IN</text>
<line x1="675.60" y1="269.90" x2="692.50" y2="269.90" stroke="#7e2424" stroke-width="1.2"/>
<circle cx="695.40" cy="269.90" r="2.80" stroke="#782020" fill="#e0ddd0" stroke-width="1.2"/>
<text x="0" y="0" font-size="9.50" text-anchor="end" fill="#262626" stroke="#262626" stroke-width="0.18" font-weight="normal" transform="translate(687.00 266.80)">9</text>
<text x="0" y="0" font-size="9.60" text-anchor="start" fill="#262626" stroke="#262626" stroke-width="0.18" font-weight="normal" transform="translate(706.00 273.30)">R2OUT</text>
<circle cx="822.20" cy="235.30" r="2.80" stroke="#782020" fill="#e0ddd0" stroke-width="1.2"/>
<line x1="825.00" y1="235.30" x2="842.40" y2="235.30" stroke="#7e2424" stroke-width="1.2"/>
<text x="0" y="0" font-size="9.50" text-anchor="start" fill="#262626" stroke="#262626" stroke-width="0.18" font-weight="normal" transform="translate(831.00 232.20)">14</text>
<text x="0" y="0" font-size="9.60" text-anchor="end" fill="#262626" stroke="#262626" stroke-width="0.18" font-weight="normal" transform="translate(812.00 238.70)">T1OUT</text>
<line x1="818.40" y1="246.30" x2="842.40" y2="246.30" stroke="#7e2424" stroke-width="1.2"/>
<text x="0" y="0" font-size="9.50" text-anchor="start" fill="#262626" stroke="#262626" stroke-width="0.18" font-weight="normal" transform="translate(831.00 243.20)">13</text>
<text x="0" y="0" font-size="9.60" text-anchor="end" fill="#262626" stroke="#262626" stroke-width="0.18" font-weight="normal" transform="translate(812.00 249.70)">R1IN</text>
<circle cx="822.20" cy="258.10" r="2.80" stroke="#782020" fill="#e0ddd0" stroke-width="1.2"/>
<line x1="825.00" y1="258.10" x2="842.40" y2="258.10" stroke="#7e2424" stroke-width="1.2"/>
<text x="0" y="0" font-size="9.50" text-anchor="start" fill="#262626" stroke="#262626" stroke-width="0.18" font-weight="normal" transform="translate(831.00 255.00)">7</text>
<text x="0" y="0" font-size="9.60" text-anchor="end" fill="#262626" stroke="#262626" stroke-width="0.18" font-weight="normal" transform="translate(812.00 261.50)">T2OUT</text>
<line x1="818.40" y1="269.60" x2="842.40" y2="269.60" stroke="#7e2424" stroke-width="1.2"/>
<text x="0" y="0" font-size="9.50" text-anchor="start" fill="#262626" stroke="#262626" stroke-width="0.18" font-weight="normal" transform="translate(831.00 266.50)">8</text>
<text x="0" y="0" font-size="9.60" text-anchor="end" fill="#262626" stroke="#262626" stroke-width="0.18" font-weight="normal" transform="translate(812.00 273.00)">R2IN</text>
<line x1="818.40" y1="293.20" x2="842.40" y2="293.20" stroke="#7e2424" stroke-width="1.2"/>
<text x="0" y="0" font-size="9.50" text-anchor="start" fill="#262626" stroke="#262626" stroke-width="0.18" font-weight="normal" transform="translate(831.00 290.10)">2</text>
<text x="0" y="0" font-size="9.60" text-anchor="end" fill="#262626" stroke="#262626" stroke-width="0.18" font-weight="normal" transform="translate(812.00 296.60)">VS+</text>
<line x1="818.40" y1="305.80" x2="842.40" y2="305.80" stroke="#7e2424" stroke-width="1.2"/>
<text x="0" y="0" font-size="9.50" text-anchor="start" fill="#262626" stroke="#262626" stroke-width="0.18" font-weight="normal" transform="translate(831.00 302.70)">6</text>
<text x="0" y="0" font-size="9.60" text-anchor="end" fill="#262626" stroke="#262626" stroke-width="0.18" font-weight="normal" transform="translate(812.00 309.20)">VS-</text>
<text x="0" y="0" font-size="9.60" text-anchor="start" fill="#262626" stroke="#262626" stroke-width="0.18" font-weight="normal" transform="translate(714.30 215.30)">C1+</text>
<text x="0" y="0" font-size="9.60" text-anchor="start" fill="#262626" stroke="#262626" stroke-width="0.18" font-weight="normal" transform="translate(786.90 215.30)">C1-</text>
<text x="0" y="0" font-size="9.60" text-anchor="start" fill="#262626" stroke="#262626" stroke-width="0.18" font-weight="normal" transform="translate(714.70 332.80)">C2+</text>
<text x="0" y="0" font-size="9.60" text-anchor="start" fill="#262626" stroke="#262626" stroke-width="0.18" font-weight="normal" transform="translate(786.60 332.80)">C2-</text>
<line x1="723.40" y1="199.60" x2="723.40" y2="175.70" stroke="#7e2424" stroke-width="1.2"/>
<line x1="794.60" y1="199.60" x2="794.60" y2="175.70" stroke="#7e2424" stroke-width="1.2"/>
<text x="0" y="0" font-size="9.50" text-anchor="start" fill="#262626" stroke="#262626" stroke-width="0.18" font-weight="normal" transform="translate(716.30 186.30)">1</text>
<text x="0" y="0" font-size="9.50" text-anchor="start" fill="#262626" stroke="#262626" stroke-width="0.18" font-weight="normal" transform="translate(786.40 186.30)">3</text>
<line x1="723.60" y1="340.80" x2="723.60" y2="369.30" stroke="#7e2424" stroke-width="1.2"/>
<line x1="794.80" y1="340.80" x2="794.80" y2="369.30" stroke="#7e2424" stroke-width="1.2"/>
<text x="0" y="0" font-size="9.50" text-anchor="start" fill="#262626" stroke="#262626" stroke-width="0.18" font-weight="normal" transform="translate(715.70 362.50)">4</text>
<text x="0" y="0" font-size="9.50" text-anchor="start" fill="#262626" stroke="#262626" stroke-width="0.18" font-weight="normal" transform="translate(787.00 362.50)">5</text>
<polyline points="723.40,175.70 723.40,163.80 735.00,163.80" stroke="#264a2e" stroke-width="1.4" fill="none" stroke-linejoin="miter"/>
<polyline points="783.80,163.80 794.60,163.80 794.60,175.70" stroke="#264a2e" stroke-width="1.4" fill="none" stroke-linejoin="miter"/>
<line x1="755.10" y1="151.70" x2="755.10" y2="175.90" stroke="#7e2424" stroke-width="1.3"/>
<line x1="762.80" y1="151.70" x2="762.80" y2="175.90" stroke="#7e2424" stroke-width="1.3"/>
<line x1="735.00" y1="163.80" x2="755.10" y2="163.80" stroke="#7e2424" stroke-width="1.2"/>
<line x1="762.80" y1="163.80" x2="783.80" y2="163.80" stroke="#7e2424" stroke-width="1.2"/>
<text x="0" y="0" font-size="14.49" text-anchor="start" fill="#262626" stroke="#262626" stroke-width="0.18" font-weight="normal" transform="translate(746.60 147.50) scale(0.940 1)">C6</text>
<text x="0" y="0" font-size="9.50" text-anchor="start" fill="#262626" stroke="#262626" stroke-width="0.18" font-weight="normal" transform="translate(746.70 185.70)">47u</text>
<polyline points="723.60,369.30 723.60,400.60 735.40,400.60" stroke="#264a2e" stroke-width="1.4" fill="none" stroke-linejoin="miter"/>
<polyline points="782.60,400.60 794.80,400.60 794.80,369.30" stroke="#264a2e" stroke-width="1.4" fill="none" stroke-linejoin="miter"/>
<line x1="755.10" y1="387.70" x2="755.10" y2="413.50" stroke="#7e2424" stroke-width="1.3"/>
<line x1="763.00" y1="387.70" x2="763.00" y2="413.50" stroke="#7e2424" stroke-width="1.3"/>
<line x1="735.40" y1="400.60" x2="755.10" y2="400.60" stroke="#7e2424" stroke-width="1.2"/>
<line x1="763.00" y1="400.60" x2="782.60" y2="400.60" stroke="#7e2424" stroke-width="1.2"/>
<text x="0" y="0" font-size="14.49" text-anchor="start" fill="#262626" stroke="#262626" stroke-width="0.18" font-weight="normal" transform="translate(746.40 384.10) scale(1.020 1)">47U</text>
<text x="0" y="0" font-size="9.50" text-anchor="start" fill="#262626" stroke="#262626" stroke-width="0.18" font-weight="normal" transform="translate(747.20 422.50)">10u</text>
<polyline points="842.40,246.30 865.30,246.30 865.30,438.60 665.00,438.60" stroke="#264a2e" stroke-width="1.4" fill="none" stroke-linejoin="miter"/>
<polyline points="842.40,258.10 878.80,258.10 878.80,462.30 853.00,462.30" stroke="#264a2e" stroke-width="1.4" fill="none" stroke-linejoin="miter"/>
<line x1="831.60" y1="462.30" x2="853.00" y2="462.30" stroke="#7e2424" stroke-width="1.2"/>
<polygon points="831.60,444.60 831.60,480.00 807.90,462.30" fill="#cbcab2" stroke="#782020" stroke-width="1.2"/>
<circle cx="804.10" cy="462.30" r="3.00" stroke="#782020" fill="#e0ddd0" stroke-width="1.2"/>
<text x="0" y="0" font-size="14.49" text-anchor="start" fill="#262626" stroke="#262626" stroke-width="0.18" font-weight="normal" transform="translate(807.50 439.30) scale(0.940 1)">U5</text>
<text x="0" y="0" font-size="9.50" text-anchor="start" fill="#262626" stroke="#262626" stroke-width="0.18" font-weight="normal" transform="translate(806.90 489.80)">NOT</text>
<line x1="665.00" y1="462.40" x2="778.00" y2="462.40" stroke="#264a2e" stroke-width="1.4"/>
<line x1="778.00" y1="462.40" x2="801.00" y2="462.40" stroke="#7e2424" stroke-width="1.2"/>
<line x1="842.40" y1="293.40" x2="901.30" y2="293.40" stroke="#264a2e" stroke-width="1.4"/>
<line x1="909.40" y1="281.30" x2="909.40" y2="305.50" stroke="#7e2424" stroke-width="1.3"/>
<line x1="917.60" y1="281.30" x2="917.60" y2="305.50" stroke="#7e2424" stroke-width="1.3"/>
<line x1="901.30" y1="293.40" x2="909.40" y2="293.40" stroke="#7e2424" stroke-width="1.2"/>
<line x1="917.60" y1="293.40" x2="935.00" y2="293.40" stroke="#7e2424" stroke-width="1.2"/>
<polyline points="935.00,293.40 949.30,293.40 949.30,246.00" stroke="#264a2e" stroke-width="1.4" fill="none" stroke-linejoin="miter"/>
<polygon points="949.3,236.6 955.8,246.0 942.9,246.0" fill="none" stroke="#263f2a" stroke-width="1.3" stroke-linejoin="round"/>
<text x="0" y="0" font-size="14.49" text-anchor="start" fill="#262626" stroke="#262626" stroke-width="0.18" font-weight="normal" transform="translate(900.90 277.20) scale(0.940 1)">C3</text>
<text x="0" y="0" font-size="9.50" text-anchor="start" fill="#262626" stroke="#262626" stroke-width="0.18" font-weight="normal" transform="translate(901.30 315.80)">47u</text>
<polyline points="842.40,305.80 853.80,305.80 853.80,341.30 910.00,341.30" stroke="#264a2e" stroke-width="1.4" fill="none" stroke-linejoin="miter"/>
<line x1="921.80" y1="328.85" x2="921.80" y2="353.75" stroke="#7e2424" stroke-width="1.3"/>
<line x1="929.60" y1="328.85" x2="929.60" y2="353.75" stroke="#7e2424" stroke-width="1.3"/>
<line x1="910.00" y1="341.30" x2="921.80" y2="341.30" stroke="#7e2424" stroke-width="1.2"/>
<line x1="929.60" y1="341.30" x2="945.00" y2="341.30" stroke="#7e2424" stroke-width="1.2"/>
<polyline points="945.00,341.30 961.30,341.30 961.30,460.20" stroke="#264a2e" stroke-width="1.4" fill="none" stroke-linejoin="miter"/>
<line x1="948.40" y1="460.20" x2="973.80" y2="460.20" stroke="#263826" stroke-width="1.6"/>
<line x1="954.50" y1="466.20" x2="967.70" y2="466.20" stroke="#263826" stroke-width="1.6"/>
<line x1="959.20" y1="472.20" x2="963.00" y2="472.20" stroke="#263826" stroke-width="1.6"/>
<text x="0" y="0" font-size="14.49" text-anchor="start" fill="#262626" stroke="#262626" stroke-width="0.18" font-weight="normal" transform="translate(913.00 325.00) scale(0.940 1)">C4</text>
<text x="0" y="0" font-size="9.50" text-anchor="start" fill="#262626" stroke="#262626" stroke-width="0.18" font-weight="normal" transform="translate(913.00 363.00)">10u</text>
<text x="0" y="0" font-size="14.49" text-anchor="start" fill="#262626" stroke="#262626" stroke-width="0.18" font-weight="normal" transform="translate(557.70 385.80) scale(0.940 1)">P1</text>
<text x="0" y="0" font-size="9.50" text-anchor="start" fill="#262626" stroke="#262626" stroke-width="0.18" font-weight="normal" transform="translate(557.40 554.50)">COMPIM</text>
<rect x="557.70" y="390.60" width="84.00" height="154.30" stroke="#782020" fill="#cbcab2" stroke-width="1.4"/>
<path d="M569.7,508.7 L569.7,414 Q569.7,410.3 573.3,409.6 L601.5,402.9 Q605.5,402.3 605.5,406.5 L605.5,516 Q605.5,521.8 600,521 L573,514.2 Q569.7,513.2 569.7,508.7 Z" fill="none" stroke="#782020" stroke-width="1.5"/>
<line x1="599.70" y1="414.70" x2="605.50" y2="414.70" stroke="#782020" stroke-width="1.2"/>
<circle cx="593.90" cy="414.70" r="5.80" stroke="#782020" fill="#e0ddd2" stroke-width="1.5"/>
<line x1="641.70" y1="414.70" x2="665.00" y2="414.70" stroke="#7e2424" stroke-width="1.2"/>
<text x="0" y="0" font-size="9.60" text-anchor="end" fill="#262626" stroke="#262626" stroke-width="0.18" font-weight="normal" transform="translate(634.90 418.20)">DCD</text>
<text x="0" y="0" font-size="9.50" text-anchor="middle" fill="#262626" stroke="#262626" stroke-width="0.18" font-weight="normal" transform="translate(655.70 412.10)">1</text>
<line x1="587.10" y1="426.50" x2="605.50" y2="426.50" stroke="#782020" stroke-width="1.2"/>
<circle cx="581.30" cy="426.50" r="5.80" stroke="#782020" fill="#e0ddd2" stroke-width="1.5"/>
<line x1="641.70" y1="426.50" x2="665.00" y2="426.50" stroke="#7e2424" stroke-width="1.2"/>
<text x="0" y="0" font-size="9.60" text-anchor="end" fill="#262626" stroke="#262626" stroke-width="0.18" font-weight="normal" transform="translate(634.90 430.00)">DSR</text>
<text x="0" y="0" font-size="9.50" text-anchor="middle" fill="#262626" stroke="#262626" stroke-width="0.18" font-weight="normal" transform="translate(655.70 423.90)">6</text>
<line x1="599.70" y1="438.60" x2="605.50" y2="438.60" stroke="#782020" stroke-width="1.2"/>
<circle cx="593.90" cy="438.60" r="5.80" stroke="#782020" fill="#e0ddd2" stroke-width="1.5"/>
<line x1="641.70" y1="438.60" x2="665.00" y2="438.60" stroke="#7e2424" stroke-width="1.2"/>
<text x="0" y="0" font-size="9.60" text-anchor="end" fill="#262626" stroke="#262626" stroke-width="0.18" font-weight="normal" transform="translate(634.90 442.10)">RXD</text>
<text x="0" y="0" font-size="9.50" text-anchor="middle" fill="#262626" stroke="#262626" stroke-width="0.18" font-weight="normal" transform="translate(655.70 436.00)">2</text>
<line x1="587.10" y1="450.50" x2="605.50" y2="450.50" stroke="#782020" stroke-width="1.2"/>
<circle cx="581.30" cy="450.50" r="5.80" stroke="#782020" fill="#e0ddd2" stroke-width="1.5"/>
<line x1="641.70" y1="450.50" x2="665.00" y2="450.50" stroke="#7e2424" stroke-width="1.2"/>
<text x="0" y="0" font-size="9.60" text-anchor="end" fill="#262626" stroke="#262626" stroke-width="0.18" font-weight="normal" transform="translate(634.90 454.00)">RTS</text>
<text x="0" y="0" font-size="9.50" text-anchor="middle" fill="#262626" stroke="#262626" stroke-width="0.18" font-weight="normal" transform="translate(655.70 447.90)">7</text>
<line x1="599.70" y1="462.40" x2="605.50" y2="462.40" stroke="#782020" stroke-width="1.2"/>
<circle cx="593.90" cy="462.40" r="5.80" stroke="#782020" fill="#e0ddd2" stroke-width="1.5"/>
<line x1="641.70" y1="462.40" x2="665.00" y2="462.40" stroke="#7e2424" stroke-width="1.2"/>
<text x="0" y="0" font-size="9.60" text-anchor="end" fill="#262626" stroke="#262626" stroke-width="0.18" font-weight="normal" transform="translate(634.90 465.90)">TXD</text>
<text x="0" y="0" font-size="9.50" text-anchor="middle" fill="#262626" stroke="#262626" stroke-width="0.18" font-weight="normal" transform="translate(655.70 459.80)">3</text>
<line x1="587.10" y1="474.20" x2="605.50" y2="474.20" stroke="#782020" stroke-width="1.2"/>
<circle cx="581.30" cy="474.20" r="5.80" stroke="#782020" fill="#e0ddd2" stroke-width="1.5"/>
<line x1="641.70" y1="474.20" x2="665.00" y2="474.20" stroke="#7e2424" stroke-width="1.2"/>
<text x="0" y="0" font-size="9.60" text-anchor="end" fill="#262626" stroke="#262626" stroke-width="0.18" font-weight="normal" transform="translate(634.90 477.70)">CTS</text>
<text x="0" y="0" font-size="9.50" text-anchor="middle" fill="#262626" stroke="#262626" stroke-width="0.18" font-weight="normal" transform="translate(655.70 471.60)">8</text>
<line x1="599.70" y1="486.10" x2="605.50" y2="486.10" stroke="#782020" stroke-width="1.2"/>
<circle cx="593.90" cy="486.10" r="5.80" stroke="#782020" fill="#e0ddd2" stroke-width="1.5"/>
<line x1="641.70" y1="486.10" x2="665.00" y2="486.10" stroke="#7e2424" stroke-width="1.2"/>
<text x="0" y="0" font-size="9.60" text-anchor="end" fill="#262626" stroke="#262626" stroke-width="0.18" font-weight="normal" transform="translate(634.90 489.60)">DTR</text>
<text x="0" y="0" font-size="9.50" text-anchor="middle" fill="#262626" stroke="#262626" stroke-width="0.18" font-weight="normal" transform="translate(655.70 483.50)">4</text>
<line x1="587.10" y1="497.90" x2="605.50" y2="497.90" stroke="#782020" stroke-width="1.2"/>
<circle cx="581.30" cy="497.90" r="5.80" stroke="#782020" fill="#e0ddd2" stroke-width="1.5"/>
<line x1="641.70" y1="497.90" x2="665.00" y2="497.90" stroke="#7e2424" stroke-width="1.2"/>
<text x="0" y="0" font-size="9.60" text-anchor="end" fill="#262626" stroke="#262626" stroke-width="0.18" font-weight="normal" transform="translate(634.90 501.40)">RI</text>
<text x="0" y="0" font-size="9.50" text-anchor="middle" fill="#262626" stroke="#262626" stroke-width="0.18" font-weight="normal" transform="translate(655.70 495.30)">9</text>
<circle cx="593.90" cy="509.30" r="5.80" stroke="#782020" fill="#e0ddd2" stroke-width="1.5"/>
<polyline points="599.70,509.50 623.40,509.50 623.40,515.80" stroke="#5e2620" stroke-width="1.2" fill="none" stroke-linejoin="miter"/>
<line x1="615.20" y1="515.80" x2="632.90" y2="515.80" stroke="#5e2620" stroke-width="1.3"/>
<line x1="618.40" y1="519.00" x2="628.80" y2="519.00" stroke="#5e2620" stroke-width="1.3"/>
<line x1="621.80" y1="522.80" x2="625.60" y2="522.80" stroke="#5e2620" stroke-width="1.3"/>
<rect x="564.90" y="528.90" width="10.20" height="8.50" stroke="#782020" fill="none" stroke-width="1.2"/>
<rect x="626.20" y="528.90" width="10.00" height="8.50" stroke="#782020" fill="none" stroke-width="1.2"/>
<text x="0" y="0" font-size="9.60" text-anchor="middle" fill="#8c2a2a" stroke="#8c2a2a" stroke-width="0.18" font-weight="normal" transform="translate(600.00 539.30)">ERROR</text>
<polyline points="665.00,414.70 712.60,414.70 712.60,486.10 665.00,486.10" stroke="#264a2e" stroke-width="1.4" fill="none" stroke-linejoin="miter"/>
<line x1="665.00" y1="426.50" x2="712.60" y2="426.50" stroke="#264a2e" stroke-width="1.4"/>
<circle cx="712.60" cy="426.50" r="2.40" stroke="#1e3a1e" fill="#1e3a1e" stroke-width="0.5"/>
<polyline points="665.00,450.50 700.40,450.50 700.40,474.20 665.00,474.20" stroke="#264a2e" stroke-width="1.4" fill="none" stroke-linejoin="miter"/>
<rect x="0" y="558" width="1024" height="1" fill="#3a3a3a"/>
</svg>
</body></html>
